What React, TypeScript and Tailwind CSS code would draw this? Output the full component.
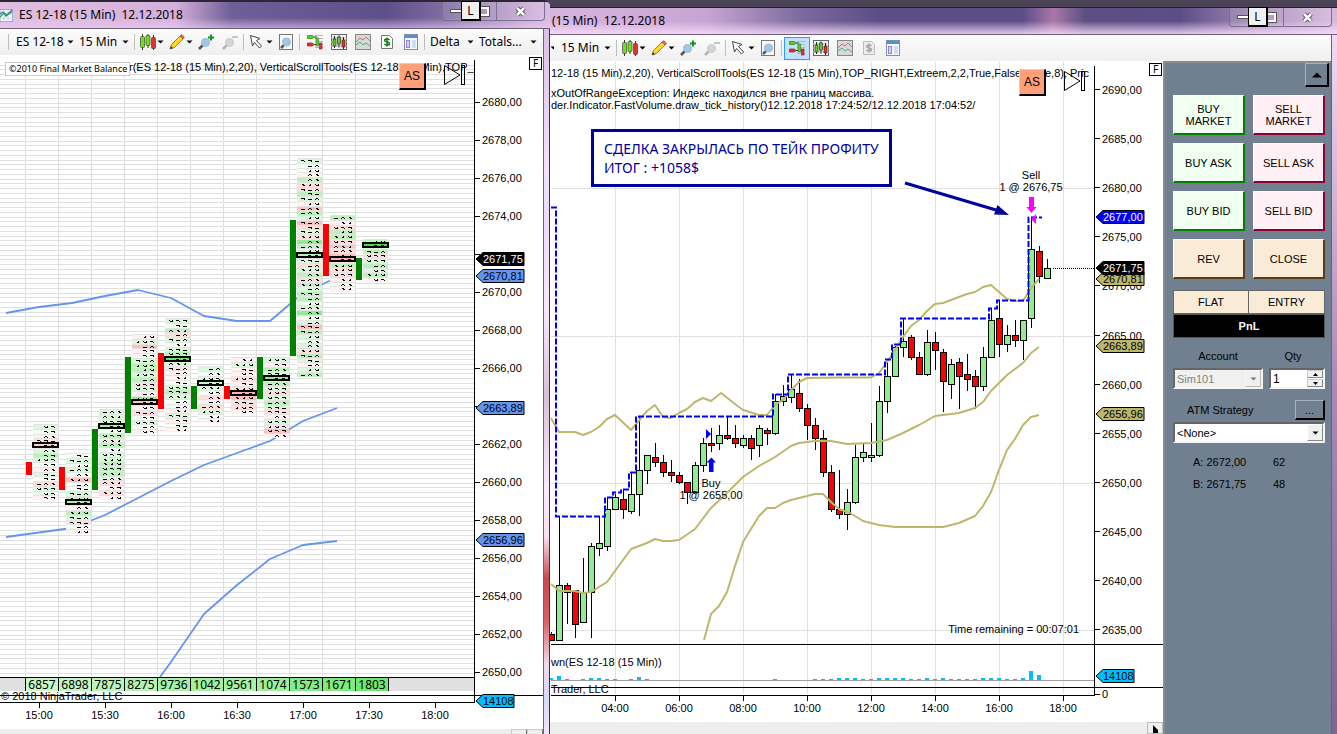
import { ReactNode } from "react"

type Side = "left" | "right"

const PRICE_FONT = '"Liberation Sans", Arial, sans-serif'

// ---------- footprint chart data ----------
// rows: one letter for each tick, a-d green from pale to strong, p-r red from pale to strong
type Footprint = { top: number; rows: string; poc: number; pocFill: string; bar: [number, number]; up: boolean; total: string }

const footprints: Footprint[] = [
  { top: 424, rows: "bapqabcbapbaqbap", poc: 445, pocFill: "#ffd0d0", bar: [462, 475], up: false, total: "6857" },
  { top: 453, rows: "ababaraabcppcbqap", poc: 502, pocFill: "#a8f0a8", bar: [467, 490], up: false, total: "6898" },
  { top: 409, rows: "bbbbacbcabbcccbqpqp", poc: 426, pocFill: "#a8f0a8", bar: [429, 490], up: true, total: "7875" },
  { top: 334, rows: "pbrpabccbcqbpdqpqabap", poc: 402, pocFill: "#ffc0c0", bar: [357, 433], up: true, total: "8275" },
  { top: 318, rows: "bacqbabcabqppabcbappbpap", poc: 359, pocFill: "#70e070", bar: [353, 409], up: false, total: "9736" },
  { top: 366, rows: "bababaqpqbap", poc: 383, pocFill: "#d0f4d0", bar: [386, 409], up: true, total: "1042" },
  { top: 357, rows: "pbppqpqprqqp", poc: 393, pocFill: "#ffb0b0", bar: [386, 399], up: false, total: "9561" },
  { top: 357, rows: "bpcbdcbqbcbqpbqrp", poc: 378, pocFill: "#90ee90", bar: [357, 399], up: true, total: "1074" },
  { top: 158, rows: "baapcqqcbprcbrqbqdcbqbqbcqcbccabdabrcbabqcbpbc", poc: 255, pocFill: "#b8f0b8", bar: [220, 356], up: true, total: "1573" },
  { top: 215, rows: "cpqccqrqrqcqqpap", poc: 259, pocFill: "#ffb0b0", bar: [224, 276], up: false, total: "1671" },
  { top: 239, rows: "cbcqbcbcp", poc: 245, pocFill: "#50d850", bar: [258, 280], up: true, total: "1803" },
]

const tints: Record<string, string> = {
  a: "#f4fdf4",
  b: "#dcf8dc",
  c: "#bdf2bd",
  d: "#90ee90",
  p: "#fff1f1",
  q: "#ffdede",
  r: "#ffc0c0",
}

const totalsFill = ["#c8f7c8", "#c4f6c4", "#bcf5bc", "#b6f4b6", "#a6f2a6", "#a0f1a0", "#a6f2a6", "#9cf09c", "#84ec84", "#7ceb7c", "#6ee86e"]

// the rows are lower than a digit, so only its crest shows in a cell
const crests = ["M1 0h3M4 1h1", "M3 0h1M2 1h2", "M1 1h1M2 0h2M4 1h1", "M1 0h4M4 1h1", "M1 0h1M4 0h1M2 1h3", "M2 0h2M3 1h2", "M1 1h4"]

const leftTimes = ["15:00", "15:30", "16:00", "16:30", "17:00", "17:30", "18:00"]

// ---------- candle chart data ----------
// high, body top, body bottom, low, u(p) or d(own)
type Candle = [number, number, number, number, "u" | "d"]

const candles: Candle[] = [
  [632, 634, 640, 640, "d"],
  [516, 585, 640, 640, "u"],
  [583, 585, 592, 624, "d"],
  [590, 590, 624, 638, "d"],
  [558, 592, 622, 622, "u"],
  [543, 546, 592, 638, "u"],
  [516, 543, 548, 556, "u"],
  [497, 509, 546, 551, "u"],
  [494, 497, 509, 509, "u"],
  [489, 499, 509, 519, "d"],
  [473, 494, 511, 514, "u"],
  [417, 470, 494, 516, "u"],
  [455, 455, 470, 484, "u"],
  [443, 457, 462, 467, "d"],
  [455, 462, 472, 477, "d"],
  [460, 472, 475, 482, "d"],
  [472, 475, 482, 484, "d"],
  [482, 482, 492, 504, "d"],
  [462, 465, 492, 492, "u"],
  [438, 443, 465, 472, "u"],
  [428, 443, 445, 452, "d"],
  [425, 435, 443, 450, "u"],
  [416, 435, 438, 440, "d"],
  [425, 438, 443, 448, "d"],
  [435, 438, 445, 448, "u"],
  [435, 438, 448, 460, "d"],
  [425, 428, 445, 457, "u"],
  [428, 430, 433, 445, "d"],
  [394, 401, 433, 435, "u"],
  [385, 396, 401, 406, "u"],
  [374, 389, 397, 403, "u"],
  [379, 393, 408, 412, "d"],
  [404, 408, 425, 440, "d"],
  [418, 425, 438, 450, "d"],
  [430, 438, 472, 477, "d"],
  [465, 472, 509, 512, "d"],
  [470, 509, 514, 519, "d"],
  [489, 502, 514, 530, "u"],
  [445, 457, 502, 504, "u"],
  [443, 452, 457, 462, "u"],
  [423, 455, 457, 462, "u"],
  [386, 401, 455, 457, "u"],
  [361, 376, 401, 413, "u"],
  [346, 347, 376, 376, "u"],
  [319, 341, 347, 357, "u"],
  [335, 337, 357, 360, "d"],
  [352, 357, 374, 374, "d"],
  [330, 342, 374, 376, "u"],
  [332, 342, 350, 370, "d"],
  [349, 352, 381, 412, "d"],
  [359, 364, 384, 399, "u"],
  [358, 362, 376, 409, "d"],
  [354, 374, 379, 391, "d"],
  [370, 376, 386, 409, "d"],
  [347, 357, 386, 391, "u"],
  [308, 320, 357, 357, "u"],
  [300, 318, 344, 357, "d"],
  [325, 335, 344, 352, "u"],
  [320, 335, 340, 347, "d"],
  [320, 320, 340, 360, "u"],
  [218, 249, 318, 328, "u"],
  [246, 251, 276, 283, "d"],
  [259, 268, 278, 278, "u"],
]

const volumes: [number, number][] = [
  [551, 2], [559, 4], [567, 1], [583, 1], [591, 2], [599, 2], [607, 1], [615, 1], [631, 1], [639, 3], [647, 1],
  [775, 1], [815, 1], [823, 1], [831, 1], [839, 2], [847, 2], [855, 2], [863, 1], [871, 1], [879, 2], [887, 2],
  [895, 2], [903, 2], [911, 1], [919, 1], [927, 2], [935, 1], [943, 2], [951, 1], [959, 1], [967, 1], [975, 1],
  [983, 2], [991, 2], [999, 2], [1007, 1], [1015, 1], [1023, 2], [1031, 9], [1039, 5],
]

const rightTimes = ["04:00", "06:00", "08:00", "10:00", "12:00", "14:00", "16:00", "18:00"]

// ---------- small drawings ----------
function PriceTag({ x, y, value, fill, color = "#000", w = 48 }: { x: number; y: number; value: string; fill: string; color?: string; w?: number }) {
  return (
    <g>
      <path d={`M${x} ${y} l7 -6.5 h${w - 7} v13 h${7 - w} z`} fill={fill} stroke="#000" />
      <text x={x + 7} y={y + 4} fill={color}>{value}</text>
    </g>
  )
}

function Caret() {
  return (
    <svg width="7" height="4" viewBox="0 0 7 4" className="shrink-0">
      <path d="M0.500 0.500h6l-3 3z" fill="#000" />
    </svg>
  )
}

function Icon({ children }: { children: ReactNode }) {
  return <svg width="16" height="16" viewBox="0 0 16 16" className="shrink-0">{children}</svg>
}

const CandlesIcon = () => (
  <Icon>
    <path d="M2.500 0v16M8 0v14M13.500 1v15" stroke="#333" />
    <rect x="0.500" y="2.500" width="4" height="11" rx="1" fill="#6fe01c" stroke="#444" strokeWidth="0.700" />
    <rect x="6" y="1.500" width="4" height="10" rx="1" fill="#6fe01c" stroke="#444" strokeWidth="0.700" />
    <rect x="11.500" y="3.500" width="4" height="11" rx="1" fill="#e03030" stroke="#444" strokeWidth="0.700" />
  </Icon>
)

const PencilIcon = () => (
  <Icon>
    <path d="M1 15l1.500-4.500L11 2l3 3-8.500 8.500z" fill="#ffd42a" stroke="#8a6a10" strokeWidth="0.800" />
    <path d="M11 2l1.800-1.500 2.700 2.700L14 5z" fill="#e8665a" stroke="#9a4038" strokeWidth="0.600" />
    <path d="M1 15l0.800-3 2.200 2.200z" fill="#333" />
  </Icon>
)

const ZoomIcon = ({ sign }: { sign: "+" | "-" }) => (
  <Icon>
    <path d="M1 15l4-4" stroke={sign === "+" ? "#555" : "#b4b4b4"} strokeWidth="2.500" />
    <circle cx="7.500" cy="8.500" r="4" fill={sign === "+" ? "#9cc8ee" : "#d6d6d6"} stroke={sign === "+" ? "#a8b4c0" : "#c8c8c8"} />
    {sign === "+"
      ? <path d="M10 3.500h6M13 0.500v6" stroke="#0a9a20" strokeWidth="2" />
      : <path d="M10 3h6" stroke="#b4b4b4" strokeWidth="1.500" />}
  </Icon>
)

const CursorIcon = () => (
  <Icon>
    <path d="M1.500 1.500l9.500 3-3.500 2 5 5.500-2 2-5-5.500-2 3.500z" fill="#fff" stroke="#444" />
  </Icon>
)

const PageZoomIcon = () => (
  <Icon>
    <rect x="1.500" y="0.500" width="13" height="15" fill="#f8f8f8" stroke="#777" />
    <path d="M3 14l3-3" stroke="#555" strokeWidth="2.500" />
    <circle cx="8.500" cy="8" r="4" fill="#9cc8ee" stroke="#a8b4c0" />
  </Icon>
)

const TraderIcon = () => (
  <Icon>
    <path d="M8 1.500h8M8 4.500h8M8 7.500h8M8 10.500h8M8 13.500h8" stroke="#b4b4b4" />
    <path d="M0.500 1.500h5l1.500 1.500-1.500 1.500h-5z" fill="#58d020" stroke="#2c7a10" strokeWidth="0.700" />
    <path d="M0.500 9h5l1.500 1.500-1.500 1.500h-5z" fill="#e83030" stroke="#901818" strokeWidth="0.700" />
    <path d="M7 3h3M7 10.500h3" stroke="#333" />
    <rect x="9" y="4" width="2.500" height="8" fill="#58d020" stroke="#2c7a10" strokeWidth="0.600" />
    <rect x="12.500" y="9" width="2.500" height="6" fill="#e83030" stroke="#901818" strokeWidth="0.600" />
  </Icon>
)

const ChartIcon = () => (
  <Icon>
    <rect x="0.500" y="0.500" width="15" height="15" fill="#f4f4f4" stroke="#666" />
    <path d="M0 4h16M0 8h16M0 12h16" stroke="#bbb" />
    <path d="M3.500 2v12M8 1.500v12M12.500 3v12" stroke="#222" />
    <rect x="2" y="5" width="3" height="7" fill="#58d020" stroke="#222" strokeWidth="0.600" />
    <rect x="6.500" y="3" width="3" height="7" fill="#58d020" stroke="#222" strokeWidth="0.600" />
    <rect x="11" y="6" width="3" height="7" fill="#e83030" stroke="#222" strokeWidth="0.600" />
  </Icon>
)

const LinesIcon = () => (
  <Icon>
    <rect x="0.500" y="0.500" width="15" height="15" fill="#d8d8d8" stroke="#888" />
    <path d="M1 8l4-4 3 2 3-3 4 4" stroke="#d86868" fill="none" />
    <path d="M1 11l4-3 3 3 3-2 4 3" stroke="#50b080" fill="none" />
  </Icon>
)

const DollarIcon = ({ on }: { on: boolean }) => (
  <Icon>
    <path d="M2.500 1.500h8l3 3v10h-11z" fill={on ? "#fff" : "#ececec"} stroke={on ? "#777" : "#bbb"} />
    <path d="M10.500 6c-1-1.500-5-1.500-5 0.500s5 1 5 3-4 2-5 0.300M8 3.500v9" stroke={on ? "#0c7c14" : "#a4a4a4"} strokeWidth="1.500" fill="none" />
  </Icon>
)

const PanelIcon = () => (
  <Icon>
    <rect x="1.500" y="0.500" width="13" height="15" fill="#f4f8ff" stroke="#8090a8" />
    <rect x="2" y="1" width="12" height="3" fill="#4f90dd" />
    <rect x="3.500" y="6.500" width="3" height="7" fill="#d8ccff" stroke="#9580f0" />
    <path d="M9 7h4M9 9h4M9 11h4M9 13h4" stroke="#a8c4e8" />
  </Icon>
)

function Tool({ label, children, caret = false, active = false }: { label: string; children: ReactNode; caret?: boolean; active?: boolean }) {
  return (
    <button aria-label={label} className={"flex h-[21px] shrink-0 items-center gap-px " + (active ? "-mx-1 bg-[#c2e0ff] px-1 outline outline-[#3399ff]" : "")}>
      {children}
      {caret && <Caret />}
    </button>
  )
}

const Divider = () => <span className="h-4 w-px shrink-0 bg-[#bdbdbd]" />

function Toolbar({ side }: { side: Side }) {
  const left = side === "left"
  return (
    <div className={"flex h-[26px] shrink-0 items-center gap-[5px] overflow-hidden whitespace-nowrap bg-linear-to-b from-[#fcfcfc] to-[#efefef] text-xs text-black " + (left ? "pl-2" : "")}>
      {left && <><Divider /><button className="ml-0.5 flex w-[58px] items-center justify-between">ES 12-18<Caret /></button></>}
      {!left && <span className="-mr-0.5 w-1 overflow-hidden"><Caret /></span>}
      <button className={"flex w-[50px] items-center justify-between " + (left ? "" : "ml-1")}>15 Min<Caret /></button>
      <Divider />
      <Tool label="Chart style" caret><CandlesIcon /></Tool>
      <Tool label="Drawing tools" caret><PencilIcon /></Tool>
      <div className="flex gap-2">
        <Tool label="Zoom in"><ZoomIcon sign="+" /></Tool>
        <Tool label="Zoom out"><ZoomIcon sign="-" /></Tool>
      </div>
      <Divider />
      <Tool label="Cursor" caret><CursorIcon /></Tool>
      <Tool label="Data box"><PageZoomIcon /></Tool>
      <Divider />
      <div className="ml-0.5 flex gap-2">
        <Tool label="Chart trader" active={!left}><TraderIcon /></Tool>
        <Tool label="Data series"><ChartIcon /></Tool>
        <Tool label="Indicators"><LinesIcon /></Tool>
        <Tool label="Strategies"><DollarIcon on={left} /></Tool>
        <Tool label="Properties"><PanelIcon /></Tool>
      </div>
      {left && (
        <>
          <Divider />
          <button className="flex w-[44px] items-center justify-between">Delta<Caret /></button>
          <button className="flex w-[58px] items-center justify-between">Totals...<Caret /></button>
        </>
      )}
    </div>
  )
}

function WindowButtons() {
  return (
    <div className="relative flex h-[19px] w-[103px] shrink-0 rounded-b border border-t-0 border-[#7d6f93] bg-white/10">
      <button aria-label="Minimize" className="flex flex-1 items-center justify-center">
        <span className="h-1 w-3 border border-[#555] bg-white" />
      </button>
      <button aria-label="Maximize" className="flex flex-1 items-center justify-center">
        <span className="h-[9px] w-3 border-2 border-white outline outline-[#555]" />
      </button>
      <button aria-label="Close" className="flex w-[48px] items-center justify-center border-l border-[#7d6f93]">
        <svg width="13" height="11" viewBox="0 0 13 11">
          <path d="M3 2l7 7M10 2l-7 7" stroke="#4a4a5a" strokeWidth="4.500" />
          <path d="M3 2l7 7M10 2l-7 7" stroke="#fff" strokeWidth="2.500" />
        </svg>
      </button>
      <button className="absolute -top-px left-[18px] h-5 w-5 border border-r-2 border-b-2 border-black bg-[#f0f0f0] text-xs leading-4">L</button>
    </div>
  )
}

function CornerButtons() {
  return (
    <>
      <button className="absolute top-2 right-[117px] flex h-[27px] w-[27px] items-center justify-center border border-r-2 border-b-2 border-[#ffc4a8] border-r-black border-b-black bg-[#ffa07a] font-['Liberation_Sans',Arial,sans-serif] text-xs">AS</button>
      <svg width="23" height="22" viewBox="0 0 23 22" className="absolute top-[9px] right-[77px]" fill="none" stroke="#000">
        <path d="M1.500 1.500L17 11 1.500 20.500z" />
        <rect x="18.500" y="1.500" width="3" height="19" />
      </svg>
      <button className="absolute top-0.5 right-px h-[13px] w-[13px] border border-black bg-white text-[10px] leading-[11px]">F</button>
    </>
  )
}

function FootprintChart() {
  const gridRows = Array.from({ length: 130 }, (_, i) => Math.round(64.5 + i * 4.75)).filter(y => y < 677)
  return (
    <div className="relative">
      <svg viewBox="0 55 543 674" className="block h-auto w-full bg-white" fontFamily={PRICE_FONT} fontSize="11">
        <g shapeRendering="crispEdges" stroke="#e0e0e0">
          {gridRows.map(y => <path key={y} d={`M0 ${y + 0.5}H474`} />)}
          {footprints.map((_, i) => <path key={i} d={`M${25.500 + i * 33} 62V677`} />)}
        </g>
        <g fill="none" stroke="#6495ed" strokeWidth="1.800" strokeLinejoin="round">
          <path d="M6 313L39 307L72 303L105 296L138 290L171 298L204 316L237 321L270 321L303 293L336 278" />
          <path d="M6 537L72 528L105 515L138 498L171 481L204 465L237 453L270 441L303 421L337 408" />
          <path d="M160 677L171 662L204 614L237 585L270 559L303 545L337 541" />
        </g>
        {footprints.map((f, col) => {
          const x = 33 + col * 33
          return (
            <g key={col} shapeRendering="crispEdges">
              {f.rows.split("").map((tint, row) => {
                const y = Math.round(f.top + row * 4.75)
                const seed = col * 13 + row * 7 + row * row * 3
                const digits = tint === "p" || tint === "a" || seed % 5 === 0 ? 2 : 3
                return (
                  <g key={row}>
                    <rect x={x} y={y} width="25" height="5" fill={tints[tint]} />
                    <path d={`M${x} ${y + 0.5}h25`} stroke="#e4e4e4" />
                    {Array.from({ length: digits }, (_, d) => (
                      <path key={d} d={crests[(seed + d * 4) % crests.length]} transform={`translate(${x + 17 - d * 7} ${y + 2.500})`} stroke="#000" />
                    ))}
                  </g>
                )
              })}
              <rect x={x} y={f.poc - 2} width="25" height="4" fill={f.pocFill} stroke="#000" strokeWidth="2" />
              <path d={`M${x + 11} ${f.poc + 0.5}h3M${x + 18} ${f.poc + 0.5}h3`} stroke="#000" />
              <rect x={x - 7} y={f.bar[0]} width="6" height={f.bar[1] - f.bar[0]} fill={f.up ? "#008000" : "#ff0000"} />
            </g>
          )
        })}
        <g shapeRendering="crispEdges">
          <rect x="0" y="678" width="474" height="13" fill="#e0e0e0" />
          <path d="M0 677.500H474M0 695.500H543M0 702.500H474M474.500 60V703" stroke="#000" />
          {footprints.map((f, i) => (
            <g key={i}>
              <rect x={25 + i * 33} y="678" width="33" height="13" fill={totalsFill[i]} />
              <path d={`M${25.500 + i * 33} 678v13M${58.500 + i * 33} 678v13`} stroke="#000" />
            </g>
          ))}
          {leftTimes.map((t, i) => <path key={t} d={`M${39.500 + i * 66} 703v5`} stroke="#000" />)}
          {Array.from({ length: 16 }, (_, i) => <path key={i} d={`M475 ${102.500 + i * 38}h5`} stroke="#000" />)}
        </g>
        <g fontSize="12" fontFamily='"Noto Sans", sans-serif'>
          {footprints.map((f, i) => <text key={i} x={42 + i * 33} y="689" textAnchor="middle">{f.total}</text>)}
        </g>
        <text x="1" y="700">© 2018 NinjaTrader, LLC</text>
        {leftTimes.map((t, i) => <text key={t} x={39 + i * 66} y="719" textAnchor="middle">{t}</text>)}
        {Array.from({ length: 16 }, (_, i) => 2680 - i * 2).filter(p => p !== 2672 && p !== 2664).map(p => (
          <text key={p} x="482" y={106 + (2680 - p) * 19}>{p},00</text>
        ))}
        <PriceTag x={476} y={276} value="2670,81" fill="#6495ed" />
        <PriceTag x={476} y={259} value="2671,75" fill="#000" color="#fff" />
        <PriceTag x={476} y={408} value="2663,89" fill="#6495ed" />
        <PriceTag x={476} y={540} value="2656,96" fill="#6495ed" />
        <PriceTag x={476} y={701} value="14108" fill="#00bfff" w={38} />
        <text x="129" y="71">r(ES 12-18 (15 Min),2,20), VerticalScrollTools(ES 12-18 (15 Min),TOP_</text>
      </svg>
      <span className="absolute top-[7px] left-[5px] border border-[#ccc] bg-white pr-0.5 pl-[3px] text-[9px] leading-3 font-['Noto_Sans',sans-serif]">©2010 Final Market Balance</span>
      <CornerButtons />
    </div>
  )
}

function CandleChart() {
  const priceY = (p: number) => Math.round(90 + (2690 - p) * 9.82)
  const prices = Array.from({ length: 12 }, (_, i) => 2690 - i * 5)
  return (
    <div className="relative bg-white">
      <svg viewBox="550 61 613 661" className="block h-auto w-full" fontFamily={PRICE_FONT} fontSize="11">
        <g shapeRendering="crispEdges" stroke="#e0e0e0">
          {rightTimes.map((t, i) => <path key={t} d={`M${615.500 + i * 64} 62V694`} />)}
          {[2680, 2665, 2650, 2635].map(p => <path key={p} d={`M551 ${priceY(p) + 0.5}H1094`} />)}
        </g>
        <g shapeRendering="crispEdges">
          {candles.map(([high, top, bottom, low, dir], i) => (
            <g key={i} stroke="#000">
              <path d={`M${551.500 + i * 8} ${high}V${low}`} />
              <rect x={548.500 + i * 8} y={top + 0.5} width="6" height={Math.max(bottom - top, 2)} fill={dir === "u" ? "#90ee90" : "#ff0000"} />
            </g>
          ))}
        </g>
        <g fill="none" stroke="#bdb76b" strokeWidth="2" strokeLinejoin="round">
          <path d="M551 418L559 432H575L583 435L591 432L599 427L607 419L615 415L631 430L647 411L655 405L663 417L671 418L679 413L687 409L695 402L703 398L711 401L721 393L735 404L743 410L759 415H767L775 405L783 400L791 390L799 382L807 378L840 377.500H871L879 373L887 362L895 350L903 337L911 326L919 320L927 311L935 304L943 303L967 294L975 292L983 287L991 285L999 292L1007 299L1015 301H1023L1031 288L1039 279" />
          <path d="M551 584L559 591H575L583 593L591 592L607 582L631 549L647 543L655 539L663 541H671L679 540L695 529L711 508L727 493L743 477L759 466L775 457L791 446L799 443L815 441H831L847 444L871 443L887 440L903 433L919 425L935 416L959 413L975 408L983 402L991 391L1007 375L1023 363L1031 353L1039 347" />
          <path d="M704 640L711 614L719 606L727 592L735 566L743 542L759 516L767 508H775L783 503L791 500L807 496L815 494H823L831 502L839 509L850 513L863 521L879 525L895 527H943L959 523L975 516L983 506L991 492L999 470L1007 450L1015 439L1023 425L1031 417L1039 415" />
        </g>
        <path d="M551 207.500H556V516.500H605V497.500H613V492.500H621V489.500H629V472.500H636V416.500H773V394.500H788V374.500H885V359.500H892V344.500H901V318.500H989V308.500H997V300.500H1028.500V217.500H1042" fill="none" stroke="#0000ff" strokeWidth="2" strokeDasharray="6 2" />
        <path d="M1053 268.500H1094" stroke="#000" strokeDasharray="1 1" />
        <path d="M706 429v10l5-5z" fill="#0000ff" />
        <path d="M711.500 457.500l4.500 5h-2.500v9.500h-4.500v-9.500h-2.500z" fill="#0000ff" />
        <path d="M1031.500 213l-5-6h2.500v-10h5v10h2.500z" fill="#ff00ff" />
        <path d="M1036 214v10l-5-5z" fill="#ff00ff" />
        <path d="M905 183L996 210" stroke="#00009c" strokeWidth="3" />
        <path d="M1009 215l-15-0.500 3.500-9.500z" fill="#00009c" />
        <g textAnchor="middle">
          <text x="711" y="487">Buy</text>
          <text x="711" y="499">1 @ 2655,00</text>
          <text x="1031" y="179">Sell</text>
          <text x="1031" y="191">1 @ 2676,75</text>
        </g>
        <text x="1079" y="633" textAnchor="end">Time remaining = 00:07:01</text>
        <text x="551" y="77">12-18 (15 Min),2,20), VerticalScrollTools(ES 12-18 (15 Min),TOP_RIGHT,Extreem,2,2,True,False,False,8), Pric</text>
        <text x="551" y="97">xOutOfRangeException: Индекс находился вне границ массива.</text>
        <text x="551" y="109">der.Indicator.FastVolume.draw_tick_history()12.12.2018 17:24:52/12.12.2018 17:04:52/</text>
        <g shapeRendering="crispEdges">
          {volumes.map(([x, h]) => <rect key={x} x={x - 2} y={680 - h} width="4" height={h} fill="#00bfff" />)}
          <path d="M551 680.500H1094" stroke="#a0a0a0" />
          <path d="M551 644.500H1163M551 687.500H1163M551 695.500H1094M1094.500 66V696" stroke="#000" />
          {rightTimes.map((t, i) => <path key={t} d={`M${615.500 + i * 64} 696v5`} stroke="#000" />)}
          {prices.map(p => <path key={p} d={`M1095 ${priceY(p) - 0.5}h5`} stroke="#000" />)}
          <path d="M1095 694.500h5" stroke="#000" />
        </g>
        <text x="551" y="666">wn(ES 12-18 (15 Min))</text>
        <text x="551" y="693">Trader, LLC</text>
        {rightTimes.map((t, i) => <text key={t} x={615 + i * 64} y="712" textAnchor="middle">{t}</text>)}
        {prices.map(p => <text key={p} x="1102" y={priceY(p) + 4}>{p},00</text>)}
        <text x="1102" y="698">0</text>
        <PriceTag x={1096} y={217} value="2677,00" fill="#0000ff" color="#fff" />
        <PriceTag x={1096} y={279} value="2670,81" fill="#bdb76b" />
        <PriceTag x={1096} y={268} value="2671,75" fill="#000" color="#fff" />
        <PriceTag x={1096} y={346} value="2663,89" fill="#bdb76b" />
        <PriceTag x={1096} y={414} value="2656,96" fill="#bdb76b" />
        <PriceTag x={1096} y={676} value="14108" fill="#00bfff" w={38} />
      </svg>
      <CornerButtons />
      <div className="absolute top-[68px] left-[41px] border-3 border-[#00009c] bg-white px-2.5 py-[7px] text-sm leading-[19px] whitespace-nowrap text-[#00009c] font-['Noto_Sans',sans-serif]">
        <p>СДЕЛКА ЗАКРЫЛАСЬ ПО ТЕЙК ПРОФИТУ</p>
        <p>ИТОГ : +1058$</p>
      </div>
    </div>
  )
}

const orderButton = "flex h-10 items-center justify-center border border-r-2 border-b-2 border-white text-center leading-3 "
const buyStyle = "border-r-[#008000] border-b-[#008000] bg-[#f0fff0]"
const sellStyle = "border-r-[#8b0030] border-b-[#8b0030] bg-[#fff0f5]"
const flatStyle = "border-r-[#5c3c14] border-b-[#5c3c14] bg-[#faebd7]"
const sunken = "border-2 border-[#f4f4f4] border-t-[#666] border-l-[#666]"

function OrderPanel() {
  return (
    <aside className="w-[168px] shrink-0 border-t-2 border-l-2 border-[#8c8c8c] bg-[#708090] pr-1.5 pl-2 font-['Liberation_Sans',Arial,sans-serif] text-[11px] text-black">
      <div className="-mr-1 flex justify-end">
        <button aria-label="Collapse" className="flex h-6 w-6 items-center justify-center border border-r-2 border-b-2 border-[#a9b4bf] border-r-black border-b-black">
          <svg width="10" height="6" viewBox="0 0 10 6"><path d="M0 5.500L5 0.500l5 5z" fill="#000" /></svg>
        </button>
      </div>
      <div className="mt-2 grid grid-cols-2 gap-2">
        <button className={orderButton + buyStyle}>BUY<br />MARKET</button>
        <button className={orderButton + sellStyle}>SELL<br />MARKET</button>
        <button className={orderButton + buyStyle}>BUY ASK</button>
        <button className={orderButton + sellStyle}>SELL ASK</button>
        <button className={orderButton + buyStyle}>BUY BID</button>
        <button className={orderButton + sellStyle}>SELL BID</button>
        <button className={orderButton + flatStyle}>REV</button>
        <button className={orderButton + flatStyle}>CLOSE</button>
      </div>
      <div className="mt-[11px] grid grid-cols-2 divide-x divide-[#666] border border-[#666] bg-[#faebd7]">
        <button className="h-[22px]">FLAT</button>
        <button className="h-[22px]">ENTRY</button>
      </div>
      <div className="h-6 border border-[#555] bg-black text-center leading-[22px] font-bold text-white">PnL</div>
      <div className="mt-2.5 flex gap-1.5">
        <div className="flex w-[90px] flex-col gap-1">
          <label htmlFor="account" className="text-center leading-4">Account</label>
          <div className={"relative h-[21px] bg-[#f0f0f0] " + sunken}>
            <select id="account" disabled className="block h-full w-full appearance-none px-0.5 leading-4 text-[#808080]"><option>Sim101</option></select>
            <span className="pointer-events-none absolute top-0 right-0 flex h-[17px] w-4 items-center justify-center border border-white border-r-[#888] border-b-[#888] opacity-50"><Caret /></span>
          </div>
        </div>
        <div className="flex flex-1 flex-col gap-1">
          <label htmlFor="qty" className="-ml-2 text-center leading-4">Qty</label>
          <div className={"flex h-[21px] bg-white " + sunken}>
            <input id="qty" defaultValue="1" className="w-0 flex-1 px-0.5 text-xs outline-none" />
            <div className="flex w-4 flex-col gap-px">
              <button aria-label="More" className="flex flex-1 items-center justify-center border border-[#ccc] border-r-[#888] border-b-[#888] bg-[#f0f0f0]"><svg width="5" height="3"><path d="M0 3h5L2.500 0z" /></svg></button>
              <button aria-label="Less" className="flex flex-1 items-center justify-center border border-[#ccc] border-r-[#888] border-b-[#888] bg-[#f0f0f0]"><svg width="5" height="3"><path d="M0 0h5L2.500 3z" /></svg></button>
            </div>
          </div>
        </div>
      </div>
      <div className="mt-[11px] flex items-center justify-between pl-3.5">
        <label htmlFor="atm">ATM Strategy</label>
        <button aria-label="Strategy options" className="h-5 w-[30px] border border-r-2 border-b-2 border-[#a9b4bf] border-r-black border-b-black leading-4">...</button>
      </div>
      <div className={"relative mt-0.5 h-[21px] bg-white " + sunken}>
        <select id="atm" className="block h-full w-full appearance-none px-0.5 leading-4"><option>&lt;None&gt;</option></select>
        <span className="pointer-events-none absolute top-0 right-0 flex h-[17px] w-4 items-center justify-center border border-white border-r-[#888] border-b-[#888] bg-[#f0f0f0]"><Caret /></span>
      </div>
      <div className="mt-2 grid grid-cols-[80px_1fr] pl-5 leading-[22px]">
        <span>A: 2672,00</span><span>62</span>
        <span>B: 2671,75</span><span>48</span>
      </div>
    </aside>
  )
}

export default function App() {
  return (
    <main className="flex h-screen overflow-hidden bg-[#4a4356] font-['Noto_Sans','Open_Sans',sans-serif] text-black">
      <section className="z-10 flex min-w-0 flex-[550_1_0px] flex-col rounded-tr-md border-t-2 border-[#2c2535] bg-white">
        <header className="flex h-[27px] shrink-0 items-start justify-between rounded-tr border-b border-[#6d6078] bg-[linear-gradient(to_bottom,transparent_60%,rgb(235_205_245/.6)),linear-gradient(to_right,#e0bfe2,#d5b0da_32%,#6f5f98_42%,#5d4f8a_70%,#7d6aa0_80%,#dcbbe2)] pr-[5px]">
          <h1 className="flex items-center gap-1.5 pt-1 text-xs leading-[18px] whitespace-pre">
            <svg width="13" height="13" viewBox="0 0 13 13">
              <rect x="0" y="0.500" width="12.500" height="12" fill="#f4f8ff" stroke="#9ab" />
              <path d="M4 1v12M8 1v12M0 5h13M0 9h13" stroke="#c8d4e4" />
              <path d="M0 5l3-2 3 4 6-6" stroke="#2c6ed8" strokeWidth="1.200" fill="none" />
              <path d="M0 8l4-4 3 2 5-3" stroke="#30a040" strokeWidth="1.200" fill="none" />
            </svg>
            {"ES 12-18 (15 Min)  12.12.2018"}
          </h1>
          <WindowButtons />
        </header>
        <div className="flex min-h-0 flex-1">
          <div className="min-w-0 flex-1">
            <Toolbar side="left" />
            <FootprintChart />
            <footer className="flex h-3 justify-end bg-[#eeeeee]">
              <span className="w-4 border border-[#ccc] border-r-[#777]" />
              <span className="w-4 border border-[#ccc] border-r-[#777]" />
            </footer>
          </div>
          <div className="w-[7px] shrink-0 border-r border-l border-[#6b6470] border-r-[#3a3340] bg-[linear-gradient(to_bottom,#dcbfe6,#f4e2fb_20%,#eadcfa_26%,#f8e8ff_40%,#d8bfd8_52%,#fbeaff_65%,#f8e0f0_72%,#c84850_78%,#d86068_84%,#f4d8ec_90%,#d8d8f8_95%,#f6e6fa)]" />
        </div>
      </section>
      <section className="mt-[7px] flex min-w-0 flex-[787_1_0px] flex-col border-t border-[#222] bg-white">
        <header className="flex h-[27px] shrink-0 items-start justify-between border-b border-[#6d6078] bg-[linear-gradient(to_bottom,transparent_50%,rgb(248_220_252/.85)),linear-gradient(to_right,#d8b4de,#c8a4d2_20%,#7c6a9e_32%,#5b4d86_42%,#5b4d86_60%,#a878a8_64%,#5d4f84_68%,#5b4d86_80%,#a88cb8_90%,#d8b8de)] pr-[5px]">
          <h1 className="pt-1 pl-0.5 text-xs leading-[18px] whitespace-pre">{"(15 Min)  12.12.2018"}</h1>
          <WindowButtons />
        </header>
        <div className="flex min-h-0 flex-1">
          <div className="flex min-w-0 flex-1 flex-col">
            <Toolbar side="right" />
            <div className="flex min-h-0 flex-1">
              <div className="min-w-0 flex-1">
                <CandleChart />
                <footer className="flex h-3 justify-end bg-[#eeeeee]">
                  <span className="flex w-4 items-end justify-center border border-[#bbb]"><svg width="5" height="8"><path d="M0 0v8h5V5z" /></svg></span>
                </footer>
              </div>
              <OrderPanel />
            </div>
          </div>
          <div className="w-[6px] shrink-0 border-l border-[#6b6470] bg-linear-to-b from-[#f3d9f7] via-[#a98bb8] to-[#7d6690]" />
        </div>
      </section>
    </main>
  )
}
